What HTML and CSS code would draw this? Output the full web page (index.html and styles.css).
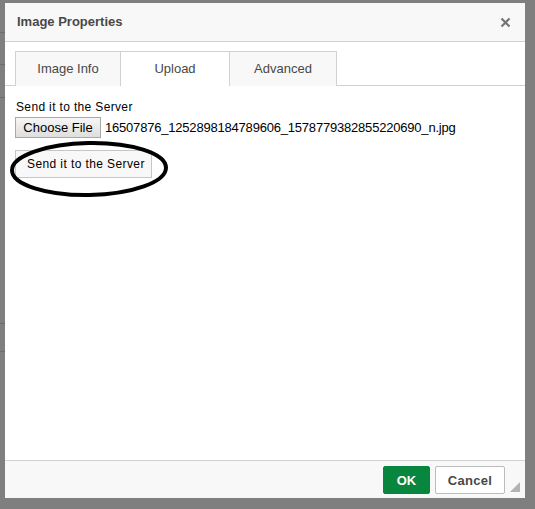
FILE: index.html
```html
<!DOCTYPE html>
<html>
<head>
<meta charset="utf-8">
<link rel="stylesheet" href="styles.css">
</head>
<body>
<div class="page">
  <div class="dialog">
    <div class="header">
      <span class="title">Image Properties</span>
      <svg class="close" width="11" height="11" viewBox="0 0 11 11"><path d="M1.5 1.5 L9.5 9.5 M9.5 1.5 L1.5 9.5" stroke="#747474" stroke-width="2.2"/></svg>
    </div>
    <div class="body">
      <div class="tabs">
        <div class="tab">Image Info</div>
        <div class="tab active">Upload</div>
        <div class="tab">Advanced</div>
      </div>
      <div class="panel">
        <div class="label">Send it to the Server</div>
        <div class="file-row">
          <span class="choose">Choose File</span>
          <span class="fname">16507876_1252898184789606_1578779382855220690_n.jpg</span>
        </div>
        <div class="send">Send it to the Server</div>
        <svg class="ring" width="180" height="70" viewBox="0 0 180 70"><ellipse cx="84" cy="33" rx="77" ry="26" fill="none" stroke="#000" stroke-width="4" transform="rotate(-1 84 33)"/></svg>
      </div>
    </div>
    <div class="footer">
      <span class="btn ok">OK</span>
      <span class="btn cancel">Cancel</span>
      <svg class="grip" width="10" height="10" viewBox="0 0 10 10"><path d="M10 0 L10 10 L0 10 Z" fill="#b2b2b2"/></svg>
    </div>
  </div>
</div>
</body>
</html>
```
FILE: styles.css
```css
html, body {
  margin: 0;
  padding: 0;
}
body {
  background-color: #7f7f7f;
  background-image:
    linear-gradient(#6c6c6c, #6c6c6c),
    linear-gradient(#6c6c6c, #6c6c6c),
    linear-gradient(#6c6c6c, #6c6c6c),
    linear-gradient(#6c6c6c, #6c6c6c),
    linear-gradient(#6c6c6c, #6c6c6c);
  background-size: 5px 1px;
  background-repeat: no-repeat;
  background-position: 0 32px, 0 64px, 0 97px, 0 323px, 0 351px;
  width: 535px;
  height: 509px;
  overflow: hidden;
  font-family: Arial, "Liberation Sans", sans-serif;
}
.page {
  padding: 3px 0 0 5px;
}
.dialog {
  width: 520px;
  height: 495px;
  background: #fff;
  display: flex;
  flex-direction: column;
}
.header {
  height: 38px;
  border-bottom: 1px solid #d1d1d1;
  background: #f8f8f8;
  display: flex;
  align-items: center;
  justify-content: space-between;
  padding: 0 14px 0 12px;
}
.title {
  font-size: 13px;
  font-weight: bold;
  color: #484848;
  position: relative;
  top: -1px;
}
.close {
  display: block;
}
.body {
  flex: 1;
  position: relative;
}
.tabs {
  display: flex;
  margin-top: 9px;
  padding-left: 10px;
  border-bottom: 1px solid #d1d1d1;
  height: 34px;
}
.tab {
  box-sizing: border-box;
  height: 35px;
  width: 106px;
  border: 1px solid #d1d1d1;
  border-bottom: none;
  background: #f8f8f8;
  color: #484848;
  font-size: 13px;
  display: flex;
  align-items: center;
  justify-content: center;
  padding-bottom: 2px;
}
.tab + .tab {
  margin-left: -1px;
}
.tab.active {
  background: #fff;
  width: 110px;
  height: 35px;
  position: relative;
  z-index: 1;
}
.tab:last-child {
  width: 108px;
}
.panel {
  position: relative;
  padding: 14px 0 0 10px;
}
.label {
  font-size: 12px;
  color: #000;
  line-height: 14px;
  padding-left: 1px;
  letter-spacing: 0.35px;
}
.file-row {
  display: flex;
  align-items: center;
  margin-top: 3px;
  height: 21px;
}
.choose {
  box-sizing: border-box;
  height: 21px;
  width: 86px;
  border: 1px solid #a9a9a9;
  background: linear-gradient(#f6f6f6, #dedede);
  font-size: 13px;
  color: #000;
  display: flex;
  align-items: center;
  justify-content: center;
}
.fname {
  font-size: 13px;
  color: #000;
  margin-left: 4px;
  letter-spacing: -0.2px;
}
.send {
  box-sizing: border-box;
  margin-top: 12px;
  width: 137px;
  height: 28px;
  border: 1px solid #c6c6c6;
  background: #f8f8f8;
  font-size: 12px;
  color: #000;
  padding: 6px 0 0 11px;
  letter-spacing: 0.4px;
}
.ring {
  position: absolute;
  left: 0;
  top: 50px;
}
.footer {
  border-top: 1px solid #d1d1d1;
  background: #f8f8f8;
  display: flex;
  align-items: flex-start;
  justify-content: flex-end;
  padding: 5px 5px 0 0;
  box-sizing: border-box;
  height: 38px;
  position: relative;
}
.btn {
  box-sizing: border-box;
  height: 28px;
  display: flex;
  align-items: center;
  justify-content: center;
  font-size: 13px;
  font-weight: bold;
  border-radius: 2px;
}
.ok {
  width: 47px;
  background: #09863e;
  color: #fff;
  border: 1px solid #09863e;
}
.cancel {
  width: 70px;
  margin-left: 5px;
  margin-right: 15px;
  background: #fff;
  color: #484848;
  border: 1px solid #bcbcbc;
  letter-spacing: 0.3px;
}
.grip {
  position: absolute;
  right: 5px;
  bottom: 6px;
}
```
